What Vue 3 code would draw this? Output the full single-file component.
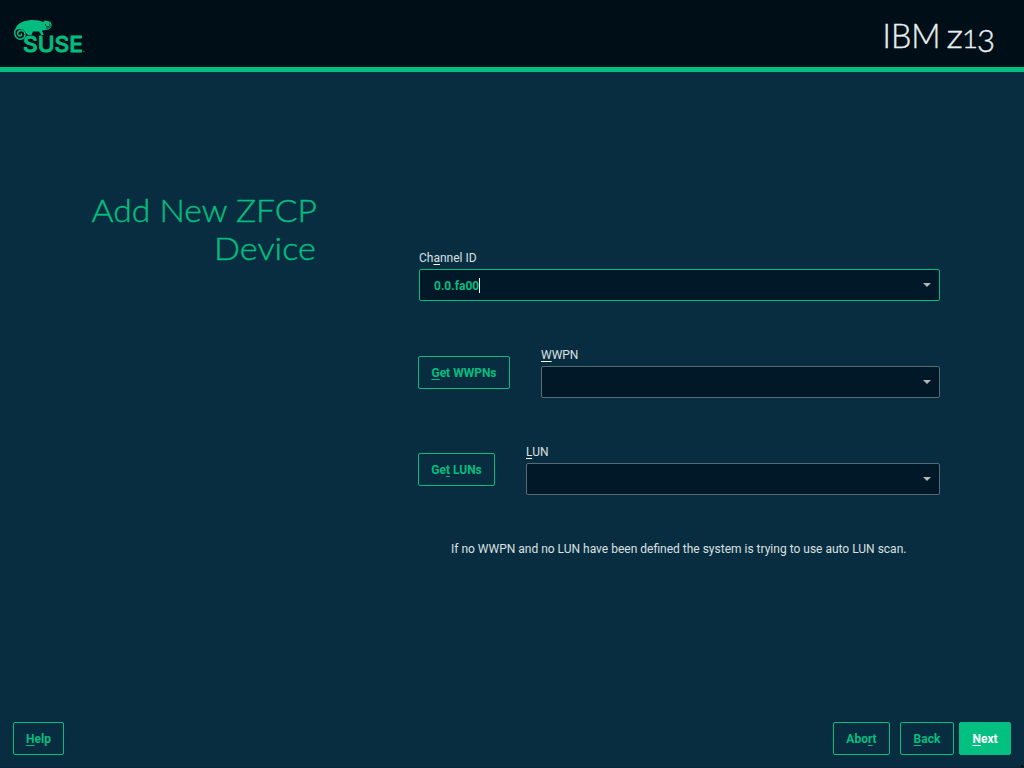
<script setup>
const actions = [
  { before: 'Abo', key: 'r', after: 't', kind: 'abort' },
  { before: '', key: 'B', after: 'ack', kind: 'back' },
  { before: '', key: 'N', after: 'ext', kind: 'next' }
]
</script>

<template>
  <div class="installer">
    <header class="banner">
      <svg class="logo" width="74" height="38" viewBox="0 0 74 38" role="img" aria-label="SUSE">
        <path class="body" d="M3 13C4 7 8 3.500 16 2.500C22 1.500 28 2.500 31 4L32 3.500L32.500 2.500Q36 2.500 38.500 4Q40.500 6.500 39 9.500L36.500 11.500L30 12.500C30 14.500 32 15 31.500 17L29.500 17L27 13.500L21 13.500L19.500 17L16 17L14 15L12 12.500Q7 9.500 3 13Z" />
        <path class="tail" d="M3.600 11.500C2 14 2.500 18 5 20C8 22.500 13 20.500 13 16.500C13 13 9.500 11.500 7 13C5 14.300 5.200 17.500 7.500 18C9.500 18.200 10.200 16.500 9 15.500" />
        <path class="shade" d="M33.500 6A2.200 2.200 0 1 0 37.500 5.500M34 10Q37.500 10.500 39 8" />
        <text x="11" y="34" textLength="60" lengthAdjust="spacingAndGlyphs">SUSE</text>
        <circle class="mark" cx="72" cy="33.500" r="0.800" />
      </svg>
      <svg class="machine" width="116" height="48" viewBox="0 0 116 48">
        <text x="0.500" y="36" textLength="58" lengthAdjust="spacingAndGlyphs">IBM</text>
        <text x="64.500" y="36" textLength="16.500" lengthAdjust="spacingAndGlyphs">z</text>
        <text class="figure one" x="80" y="36" textLength="16" lengthAdjust="spacingAndGlyphs">1</text>
        <text class="figure" x="95" y="40.300" textLength="18" lengthAdjust="spacingAndGlyphs">3</text>
      </svg>
    </header>

    <main class="content">
      <h1 class="title">
        <svg width="240" height="84" viewBox="0 0 240 84">
          <text x="5.500" y="32" textLength="225.500" lengthAdjust="spacingAndGlyphs">Add New ZFCP</text>
          <text x="128" y="70" textLength="102" lengthAdjust="spacingAndGlyphs">Device</text>
        </svg>
      </h1>

      <form class="form" @submit.prevent>
        <div class="field channel">
          <label class="label">Ch<u>a</u>nnel ID</label>
          <div class="combo focused">
            <span class="value">0.0.fa00</span><i class="caret"></i>
            <svg class="arrow" width="8" height="4" viewBox="0 0 8 4"><path d="M0 0H8L4 4Z" /></svg>
          </div>
        </div>

        <div class="row">
          <button type="button" class="button wwpns"><u>G</u>et WWPNs</button>
          <div class="field">
            <label class="label"><u>W</u>WPN</label>
            <div class="combo">
              <svg class="arrow" width="8" height="4" viewBox="0 0 8 4"><path d="M0 0H8L4 4Z" /></svg>
            </div>
          </div>
        </div>

        <div class="row">
          <button type="button" class="button luns">Ge<u>t</u> LUNs</button>
          <div class="field">
            <label class="label"><u>L</u>UN</label>
            <div class="combo">
              <svg class="arrow" width="8" height="4" viewBox="0 0 8 4"><path d="M0 0H8L4 4Z" /></svg>
            </div>
          </div>
        </div>

        <p class="hint">If no WWPN and no LUN have been defined the system is trying to use auto LUN scan.</p>
      </form>
    </main>

    <footer class="footer">
      <button type="button" class="button help"><u>H</u>elp</button>
      <button v-for="a in actions" :key="a.kind" type="button" class="button" :class="a.kind">{{ a.before }}<u>{{ a.key }}</u>{{ a.after }}</button>
    </footer>
    <svg class="pointer" width="3" height="3" viewBox="0 0 3 3"><path d="M0 0H1L3 2V3H1Z" /></svg>
  </div>
</template>

<style>
body { margin: 0; background: #092d40; }
</style>

<style scoped>
.installer {
  position: relative;
  width: 1024px;
  height: 768px;
  box-sizing: border-box;
  display: flex;
  flex-direction: column;
  overflow: hidden;
  background: #092d40;
  border-bottom: 1px solid #082638;
  color: #d9e0e0;
  font: 12px/16px Roboto, "Liberation Sans", sans-serif;
}
.banner {
  height: 72px;
  box-sizing: border-box;
  flex: none;
  display: flex;
  justify-content: space-between;
  padding: 18px 26px 0 12px;
  background: #000f17;
  border-bottom: 5px solid #02be80;
}
.logo .body { fill: #02bd7f; }
.logo .tail { fill: none; stroke: #02bd7f; stroke-width: 1.5; }
.logo .shade { fill: none; stroke: #04241f; stroke-width: 0.8; }
.logo .mark { fill: #02805a; }
.logo text {
  font: 500 21px Inter, sans-serif;
  fill: #02bd7f;
  stroke: #02bd7f;
  stroke-width: 0.8;
  stroke-linejoin: round;
}
.machine { margin-top: -6px; }
.machine text {
  font: 300 33px Lato, sans-serif;
  fill: #e9eef0;
  stroke: #e9eef0;
  stroke-width: 0.4;
}
.machine .figure { font-size: 31px; }
.machine .one { font-size: 25px; }
.content {
  flex: 1;
  display: flex;
  align-items: flex-start;
}
.title {
  width: 240px;
  height: 84px;
  margin: 118px 92px 0 86px;
}
.title svg { display: block; }
.title text {
  font: 300 32px Lato, sans-serif;
  fill: #02bd7f;
  stroke: #02bd7f;
  stroke-width: 0.4;
}
.form {
  width: 522px;
  margin-top: 178px;
  display: flex;
  flex-direction: column;
}
.field { flex: 1; }
.channel { flex: none; margin-left: 1px; }
.label {
  display: block;
  height: 19px;
}
u {
  text-decoration: underline;
  text-decoration-thickness: 1px;
  text-underline-offset: 2px;
  text-decoration-skip-ink: none;
}
.label u { text-decoration-color: #fff; }
.combo {
  height: 32px;
  box-sizing: border-box;
  display: flex;
  align-items: center;
  padding: 0 8px 0 14px;
  background: #001827;
  border: 1px solid #566b78;
  border-radius: 2px;
}
.combo.focused { border-color: #02bd7f; }
.value { font-weight: 700; color: #02bd7f; padding-top: 2px; }
.caret { width: 1px; height: 15px; background: #fff; }
.arrow { margin-left: auto; fill: #b4b7b6; }
.row {
  display: flex;
  margin-top: 46px;
}
.button {
  height: 33px;
  flex: none;
  box-sizing: border-box;
  padding: 1px 0 0;
  border: 1px solid #02bd7f;
  border-radius: 2px;
  background: transparent;
  color: #02bd7f;
  font: 700 12px/16px Roboto, "Liberation Sans", sans-serif;
}
.wwpns { width: 92px; margin: 9px 31px 0 0; }
.luns { width: 77px; margin: 9px 31px 0 0; }
.hint {
  margin: 46px 0 0 33px;
  white-space: nowrap;
}
.footer {
  height: 45px;
  display: flex;
  padding: 0 13px;
}
.help { width: 51px; margin-right: auto; }
.abort { width: 57px; margin-right: 10px; }
.back { width: 54px; margin-right: 5px; }
.next { width: 52px; background: #02c080; color: #fff; }
.pointer { position: absolute; right: 0; bottom: -1px; fill: #000; }
</style>
